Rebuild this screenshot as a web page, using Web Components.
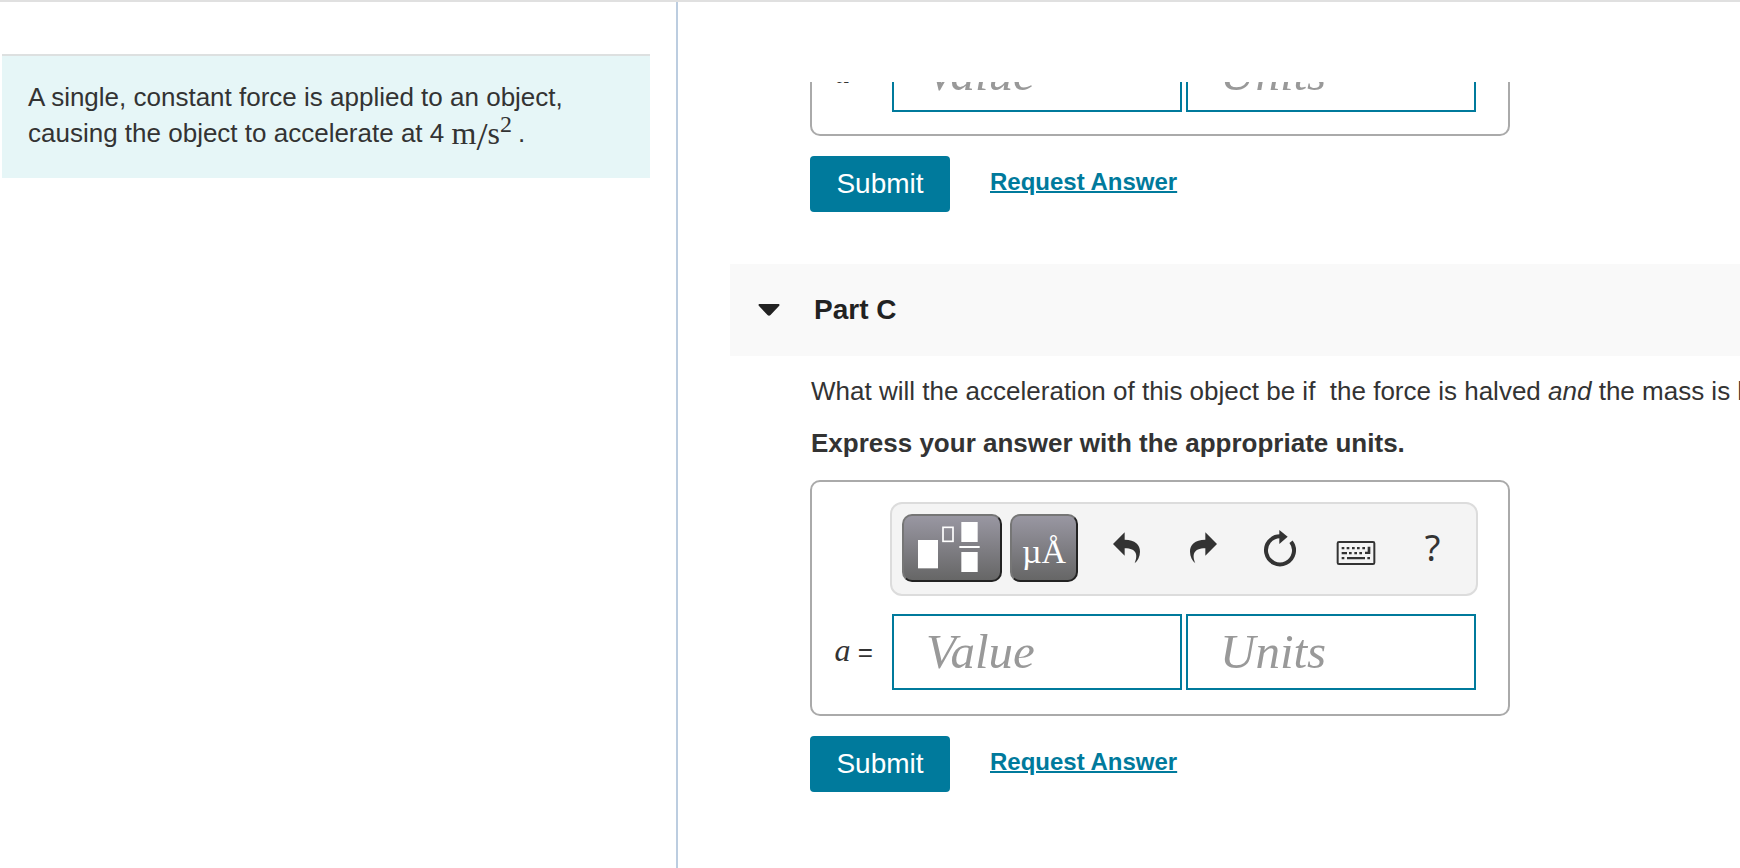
<!DOCTYPE html>
<html lang="en">
<head>
<meta charset="utf-8">
<title>Part C</title>
<style>
* {
  box-sizing: border-box;
}

body {
  margin: 0;
  color: #333;
  background: #fff;
  font: 26px/36px "Liberation Sans", Arial, sans-serif;
}

p {
  margin: 0;
}

.previous {
  --box-bottom: 22px;
}

.unit {
  margin-right: 6px;
  font: 32px/30px "Liberation Serif", serif;
  vertical-align: -2px;
}

.unit .slash {
  font-size: 40px;
  line-height: 30px;
  vertical-align: -6px;
}

.unit sup {
  font-size: 24px;
  line-height: 0;
}
</style>
</head>
<body>

<assignment-page>
  <problem-intro slot="intro">A single, constant force is applied to an object, causing the object to accelerate at 4 <span class="unit">m<span class="slash">/</span>s<sup>2</sup></span>.</problem-intro>

  <problem-part class="previous">
    <answer-box></answer-box>
  </problem-part>

  <problem-part heading="Part C">
    <p slot="question">What will the acceleration of this object be if &nbsp;the force is halved <em>and</em> the mass is halved?</p>
    <b slot="hint">Express your answer with the appropriate units.</b>
    <answer-box>
      <math-toolbar slot="toolbar"></math-toolbar>
    </answer-box>
  </problem-part>
</assignment-page>

<script>
class AssignmentPage extends HTMLElement {
  constructor() {
    super();
    this.attachShadow({ mode: "open" });
    this.shadowRoot.innerHTML = `
<style>
:host {
  display: grid;
  grid-template-columns: minmax(0, 678px) minmax(0, 1fr);
  min-height: 100vh;
  box-sizing: border-box;
  border-top: 2px solid #e0e0e0;
  overflow: hidden;
}

aside {
  padding: 52px 26px 0 2px;
  border-right: 2px solid #bccde0;
}

main {
  padding: 80px 0 40px 52px;
  min-width: 0;
}

.scroller {
  overflow: hidden;
}
</style>
<aside><slot name="intro"></slot></aside>
<main><div class="scroller"><slot></slot></div></main>
`;
  }
}
customElements.define("assignment-page", AssignmentPage);


class ProblemIntro extends HTMLElement {
  constructor() {
    super();
    this.attachShadow({ mode: "open" });
    this.shadowRoot.innerHTML = `
<style>
:host {
  display: block;
  padding: 23px 60px 26px 26px;
  border-top: 2px solid #dde0e0;
  background: #e6f6f7;
}
</style>
<slot></slot>
`;
  }
}
customElements.define("problem-intro", ProblemIntro);


class ProblemPart extends HTMLElement {
  constructor() {
    super();
    this.attachShadow({ mode: "open" });
  }

  connectedCallback() {
    const heading = this.getAttribute("heading");

    this.shadowRoot.innerHTML = `
<style>
:host {
  display: block;
}

:host(.previous) {
  margin: -86px 0 52px;
}

header {
  display: flex;
  align-items: center;
  height: 92px;
  background: #f9f9f9;
}

.toggle {
  width: 84px;
  height: 92px;
  padding: 0 34px 0 28px;
  border: 0;
  background: none;
}

.toggle svg {
  display: block;
  width: 22px;
  height: 12px;
}

h2 {
  margin: 0;
  color: #222;
  font-size: 28px;
  line-height: 36px;
}

.body {
  padding-left: 80px;
}

.text {
  display: grid;
  gap: 16px;
  padding: 17px 0 19px 1px;
  white-space: nowrap;
}

footer {
  display: flex;
  align-items: center;
  gap: 40px;
  margin-top: 20px;
}

.submit {
  width: 140px;
  height: 56px;
  padding: 0;
  border: 0;
  border-radius: 4px;
  background: #007a9c;
  color: #fff;
  font: inherit;
  font-size: 28px;
}

a {
  padding-bottom: 4px;
  color: #007a9c;
  font-size: 24px;
  font-weight: bold;
  text-decoration-thickness: 2px;
}
</style>
${heading ? `<header>
  <button class="toggle" aria-label="Collapse ${heading}">
    <svg viewBox="0 0 22 12"><path d="M1 0H21Q22 1 21 2L12.500 11Q11 12.500 9.500 11L1 2Q0 1 1 0Z" fill="#222"/></svg>
  </button>
  <h2>${heading}</h2>
</header>` : ""}
<div class="body">
  ${heading ? `<div class="text">
    <slot name="question"></slot>
    <slot name="hint"></slot>
  </div>` : ""}
  <slot></slot>
  <footer>
    <button class="submit">Submit</button>
    <a href="#">Request Answer</a>
  </footer>
</div>
`;
  }
}
customElements.define("problem-part", ProblemPart);


class AnswerBox extends HTMLElement {
  constructor() {
    super();
    this.attachShadow({ mode: "open" });
    this.shadowRoot.innerHTML = `
<style>
:host {
  display: grid;
  grid-template-columns: 78px minmax(0, 1fr);
  row-gap: 18px;
  align-items: center;
  box-sizing: border-box;
  max-width: 700px;
  padding: 20px 30px var(--box-bottom, 24px) 0;
  border: 2px solid #aaa;
  border-radius: 10px;
}

slot {
  display: block;
  grid-column: 2;
}

label {
  grid-column: 1;
  padding: 0 17px 2px 0;
  text-align: right;
  white-space: nowrap;
  font-size: 26px;
}

i {
  font-family: "Liberation Serif", serif;
  font-size: 32px;
}

.fields {
  grid-column: 2;
  display: flex;
  gap: 4px;
  padding: 0 2px;
}

input {
  flex: 1;
  min-width: 0;
  height: 76px;
  box-sizing: border-box;
  padding: 0 32px 2px;
  border: 2px solid #007a9c;
  border-radius: 0;
  background: #fff;
  color: #333;
  font: italic 49px "Liberation Serif", serif;
}

input::placeholder {
  color: #999;
  opacity: 1;
}
</style>
<slot name="toolbar"></slot>
<label for="value"><i>a</i> =</label>
<div class="fields">
  <input id="value" type="text" placeholder="Value">
  <input type="text" placeholder="Units" aria-label="Units">
</div>
`;
  }
}
customElements.define("answer-box", AnswerBox);


class MathToolbar extends HTMLElement {
  constructor() {
    super();
    this.attachShadow({ mode: "open" });
    this.shadowRoot.innerHTML = `
<style>
:host {
  display: flex;
  align-items: center;
  box-sizing: border-box;
  height: 94px;
  padding: 0 0 2px 10px;
  border: 2px solid #dcdcdc;
  border-radius: 12px;
  background: #f4f4f4;
}

button {
  display: block;
  width: 77px;
  height: 68px;
  box-sizing: border-box;
  padding: 0;
  border: 0;
  background: none;
  color: #333;
}

svg {
  display: block;
  width: 77px;
  height: 68px;
  fill: #333;
}

.dark {
  width: 68px;
  margin-right: 8px;
  border: 2px solid;
  border-color: #767676 #222 #222 #767676;
  border-radius: 10px;
  background: linear-gradient(#9997a2, #666);
  color: #fff;
}

.templates {
  width: 100px;
}

.templates svg {
  width: 96px;
  height: 64px;
  fill: #fff;
}

.units {
  margin-right: 10px;
  padding-top: 8px;
  font: 34px "Liberation Serif", serif;
}

.help {
  padding: 0 4px 2px 0;
  font: 36px "Noto Sans", sans-serif;
}
</style>
<button class="dark templates" aria-label="Templates">
  <svg viewBox="6 6 288 192">
    <rect x="48" y="78" width="60" height="85"/>
    <rect x="123" y="40" width="30" height="42" fill="none" stroke="#fff" stroke-width="5"/>
    <rect x="178" y="24" width="49" height="60"/>
    <rect x="172" y="96" width="61" height="6"/>
    <rect x="178" y="114" width="49" height="60"/>
  </svg>
</button>
<button class="dark units" aria-label="Units">µÅ</button>
<button aria-label="Undo">
  <svg viewBox="0 0 231 204"><path d="M75 90L110 55V77C142 77 156 92 156 113C156 128 149 140 140 148C150 124 147 103 110 103V125Z"/></svg>
</button>
<button aria-label="Redo">
  <svg viewBox="0 0 231 204"><path d="M156 90L121 55V77C89 77 75 92 75 113C75 128 82 140 91 148C81 124 84 103 121 103V125Z"/></svg>
</button>
<button aria-label="Reset">
  <svg viewBox="0 0 231 204">
    <path d="M114 67A42 42 0 1 0 147 83" fill="none" stroke="#333" stroke-width="12"/>
    <path d="M112 48L137 68L112 90Z"/>
  </svg>
</button>
<button aria-label="Keyboard shortcuts">
  <svg viewBox="0 0 231 204">
    <rect x="56" y="84" width="110" height="66" rx="4" fill="none" stroke="#333" stroke-width="6"/>
    <path d="M68 99h8v7h-8zM83 99h8v7h-8zM99 99h8v7h-8zM114 99h8v7h-8zM130 99h8v7h-8zM146 98h8v22h-16v-7h8z"/>
    <path d="M68 114h16v7h-16zM90 114h8v7h-8zM106 114h8v7h-8zM121 114h8v7h-8z"/>
    <path d="M68 129h8v7h-8zM84 129h54v7h-54zM145 129h8v7h-8z"/>
  </svg>
</button>
<button class="help" aria-label="Help">?</button>
`;
  }
}
customElements.define("math-toolbar", MathToolbar);
</script>
</body>
</html>
